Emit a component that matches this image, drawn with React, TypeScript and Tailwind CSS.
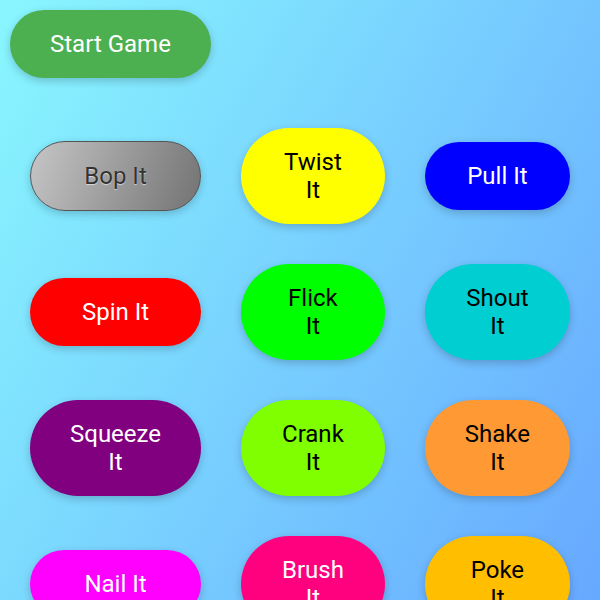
import React from "react";

type Btn = { label: string; cls: string };

const buttons: Btn[] = [
  {
    label: "Bop It",
    cls: "bg-[linear-gradient(110deg,#c6c6c6_0%,#9c9c9c_50%,#737373_100%)] text-[#333] border border-[#555] [text-shadow:0_1px_1px_rgba(255,255,255,0.6)]",
  },
  { label: "Twist It", cls: "bg-[#ffff00] text-black" },
  { label: "Pull It", cls: "bg-[#0000ff] text-white" },
  { label: "Spin It", cls: "bg-[#ff0000] text-white" },
  { label: "Flick It", cls: "bg-[#00ff00] text-black" },
  { label: "Shout It", cls: "bg-[#00ced1] text-black" },
  { label: "Squeeze It", cls: "bg-[#800080] text-white" },
  { label: "Crank It", cls: "bg-[#7fff00] text-black" },
  { label: "Shake It", cls: "bg-[#ff9933] text-black" },
  { label: "Nail It", cls: "bg-[#ff00ff] text-white" },
  { label: "Brush It", cls: "bg-[#ff007f] text-white" },
  { label: "Poke It", cls: "bg-[#ffbf00] text-black" },
];

export default function App() {
  return (
    <div className="min-h-screen w-full bg-[linear-gradient(120deg,#89f7fe_0%,#66a6ff_100%)] p-[10px] font-['Roboto',sans-serif]">
      <button className="rounded-full bg-[#4caf50] px-10 py-5 text-[24px] leading-[28px] text-white shadow-[0_3px_8px_rgba(0,0,0,0.2)]">
        Start Game
      </button>
      <div className="mt-[50px] grid grid-cols-[1fr_1fr_1fr] items-center gap-x-10 gap-y-10 px-5">
        {buttons.map((b) => (
          <button
            key={b.label}
            className={`rounded-full px-10 py-5 text-[24px] leading-[28px] shadow-[0_3px_8px_rgba(0,0,0,0.2)] ${b.cls}`}
          >
            {b.label}
          </button>
        ))}
      </div>
    </div>
  );
}
